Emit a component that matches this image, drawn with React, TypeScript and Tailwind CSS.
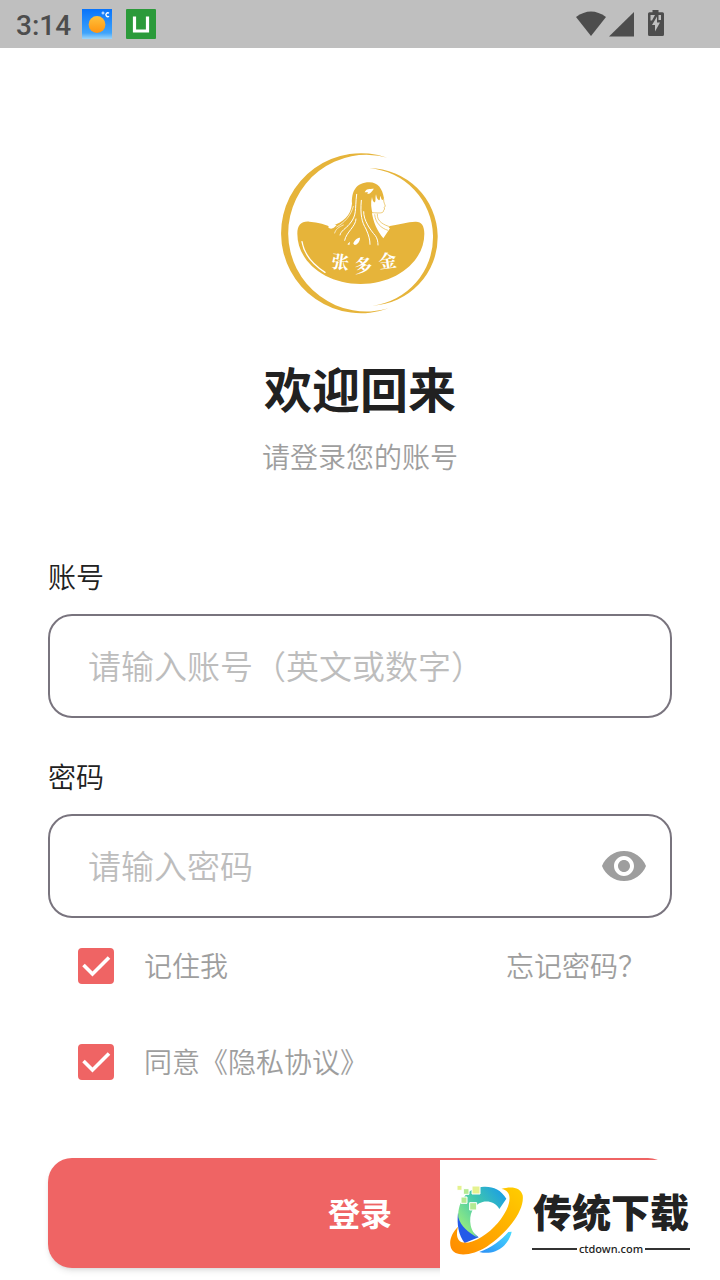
import { useState } from 'react';

function StatusBar() {
  return (
    <header className="flex h-12 items-center justify-between bg-[#bfbfbf] pr-14 pl-4 text-[#4d4d4d]">
      <div className="flex items-center">
        <span className="w-[66px] pt-1 font-['Roboto',sans-serif] text-[28px] leading-8 font-medium">3:14</span>
        <svg viewBox="0 0 30 30" className="size-[30px]" aria-hidden="true">
          <defs>
            <linearGradient id="sky" x1="0" y1="0" x2="0" y2="1">
              <stop offset="0" stopColor="#0873fb" />
              <stop offset="0.8" stopColor="#3fa4fb" />
              <stop offset="1" stopColor="#9fd6f8" />
            </linearGradient>
            <linearGradient id="sun" x1="0" y1="0" x2="0" y2="1">
              <stop offset="0" stopColor="#ffc23c" />
              <stop offset="1" stopColor="#ff9410" />
            </linearGradient>
          </defs>
          <rect width="30" height="30" fill="url(#sky)" />
          <circle cx="15" cy="15.5" r="8.4" fill="url(#sun)" />
          <circle cx="21" cy="4" r="1" fill="none" stroke="#fff" strokeWidth="0.9" />
          <path d="M27 4.200a1.900 1.900 0 1 0 0 3" fill="none" stroke="#fff" strokeWidth="1.4" />
        </svg>
        <svg viewBox="0 0 30 30" className="ml-[14px] size-[30px]" aria-hidden="true">
          <rect width="30" height="30" rx="1" fill="#2b9a3a" />
          <path d="M8.500 7.500v14.500h13v-14.500" fill="none" stroke="#fff" strokeWidth="3.2" />
        </svg>
      </div>
      <svg viewBox="0 0 88 28" className="h-7 w-[88px]" fill="currentColor" aria-hidden="true">
        <path d="M0 7Q15-4 30 7L15 26z" />
        <path d="M58 2v24.500H33z" />
        <path
          fillRule="evenodd"
          d="M76.500 2.200V0h6v2.200h4a1.500 1.500 0 0 1 1.500 1.500V24.500a1.500 1.500 0 0 1-1.500 1.500h-13a1.500 1.500 0 0 1-1.500-1.500V3.700a1.500 1.500 0 0 1 1.500-1.500zM74.500 5v5.500h1.500l3-5.500zM82.500 5v5h2.500V5zM81 6.500l-5 8.500h3v6.500l5-9h-3z"
        />
      </svg>
    </header>
  );
}

function BrandLogo() {
  return (
    <svg viewBox="0 -3 540 540" className="size-[180px]" role="img" aria-label="张多金">
      <g fill="#e6b43a">
        <path d="M352 38A240 240 0 1 0 356 490A235 235 0 1 1 352 38Z" />
        <path d="M298 70A206.100 206.100 0 0 1 306 482A207 207 0 0 0 298 70Z" />
        <path d="M82 266C82 240 94 228 118 230C145 232 166 238 192 250L240 290L330 285L360 243C388 238 412 231 436 230C454 229 463 242 463 266C463 350 378 417 272 417C166 417 82 350 82 266Z" />
        <path d="M194 268C188 260 196 248 184 244C220 230 242 214 246 176C244 140 258 112 298 112C324 113 337 130 342 160C336 172 334 160 331 152C329 160 331 166 327 166C321 163 320 156 318 148C315 158 318 166 315 172C309 172 307 162 306 156C301 174 304 190 308 208C312 232 326 258 346 276L330 296H222Z" />
      </g>
      <path d="M306 204C310 232 322 258 340 280L360 250C338 242 322 232 324 206Z" fill="#fff" />
      <g fill="none" stroke="#e6b43a" strokeWidth="2">
        <path d="M341 162C340 172 345 178 346 184L342 187L344 192L341 196C340 206 330 204 306 203" />
        <path d="M322 206C320 230 342 240 362 246M314 208C316 234 334 250 354 256" />
      </g>
      <g fill="none" stroke="#fff" strokeLinecap="round" strokeWidth="3">
        <path d="M260 148C254 196 262 210 238 238C228 250 212 258 210 270M274 166C270 210 276 232 288 252C296 270 300 284 300 298M281 200C280 226 302 256 316 272C322 280 324 290 324 300M258 222C258 244 228 262 224 286" />
        <path d="M250 184C242 214 224 232 200 246M194 264C196 254 206 246 220 240" strokeWidth="2" />
        <path d="M96 290C102 328 128 358 165 382" strokeWidth="4" />
      </g>
      <g fill="#fff">
        <path d="M284 142C288 130 298 132 312 131C306 137 304 146 292 147L294 142Z" />
        <path d="M174 246C180 238 190 238 200 240C194 246 188 254 178 250Z" />
        <path d="M250 296C252 286 262 278 270 278C270 288 264 298 254 300ZM232 298L240 290L238 300Z" />
      </g>
      <g className="font-['Noto_Serif_CJK_SC','Noto_Sans_CJK_SC',serif] text-[54px] font-bold" fill="#fff" textAnchor="middle">
        <text x="211" y="371" transform="rotate(8 211 350)">张</text>
        <text x="280" y="381" transform="rotate(-6 280 360)">多</text>
        <text x="353" y="368" transform="rotate(-8 352 350)">金</text>
      </g>
    </svg>
  );
}

function CheckOption({ label, checked, onChange }: { label: string; checked: boolean; onChange: (v: boolean) => void }) {
  return (
    <label className="flex items-center gap-[30px]">
      <span className="grid size-9 place-items-center">
        <input
          type="checkbox"
          checked={checked}
          onChange={(e) => onChange(e.target.checked)}
          className="peer col-start-1 row-start-1 size-9 appearance-none rounded border-4 border-[#9e9e9e] checked:border-[#ef6464] checked:bg-[#ef6464]"
        />
        <svg viewBox="0 0 36 36" className="pointer-events-none invisible col-start-1 row-start-1 size-9 peer-checked:visible" aria-hidden="true">
          <path d="M5.500 17l9 9L31 9.500" fill="none" stroke="#fff" strokeWidth="3.600" />
        </svg>
      </span>
      <span className="pb-[2px]">{label}</span>
    </label>
  );
}

function Watermark() {
  return (
    <aside className="fixed right-0 bottom-0 flex h-[120px] w-[280px] items-center bg-white pr-[30px] pl-[10px] text-[#222]">
      <svg viewBox="30 100 222 216" className="h-[72px] w-[74px]" aria-hidden="true">
        <defs>
          <linearGradient id="arc" x1="0" y1="0.8" x2="1" y2="0">
            <stop offset="0" stopColor="#9df07c" />
            <stop offset="0.5" stopColor="#3fc6ae" />
            <stop offset="1" stopColor="#1496f0" />
          </linearGradient>
          <linearGradient id="ring" x1="0" y1="1" x2="1" y2="0">
            <stop offset="0" stopColor="#ff8a00" />
            <stop offset="1" stopColor="#ffce00" />
          </linearGradient>
          <linearGradient id="tail" x1="0" y1="1" x2="1" y2="0">
            <stop offset="0" stopColor="#2b8ef5" />
            <stop offset="1" stopColor="#48dcff" />
          </linearGradient>
        </defs>
        <path d="M54 186C50 222 56 254 74 277L116 260C92 240 66 214 54 186Z" fill="#245be8" />
        <path d="M55 200C52 150 86 108 132 108C160 107 182 116 199 144L178 175C166 156 148 150 128 154C98 162 86 192 92 224C96 242 104 252 114 261C84 246 62 226 55 200Z" fill="url(#arc)" />
        <path d="M118 304C154 292 184 268 205 244L215 243C206 284 168 316 118 304Z" fill="url(#tail)" />
        <path
          d="M184 115C214 106 242 110 248 134C255 180 200 250 140 288C98 314 46 322 33 292C26 272 34 248 54 228C48 250 50 270 66 275C94 282 142 254 174 216C204 180 216 144 204 126C198 118 192 116 184 115Z"
          fill="url(#ring)"
        />
        <g stroke="#fff" strokeWidth="3">
          <path d="M51 104h15v15H51zM96 106h24v24H96z" fill="#e5f28f" />
          <path d="M70 114h17v17H70zM63 139h18v19H63zM89 156h21v22H89z" fill="#b3ea92" />
        </g>
      </svg>
      <div className="flex flex-1 flex-col items-center pt-1 pl-2">
        <span className="text-[39px] leading-[54px] font-black whitespace-nowrap">传统下载</span>
        <span className="flex w-full items-center gap-[2px] font-['Noto_Sans',sans-serif] text-[11px] leading-6 font-medium">
          <i className="h-[2px] flex-1 bg-[#333]" />
          ctdown.com
          <i className="h-[2px] flex-1 bg-[#333]" />
        </span>
      </div>
    </aside>
  );
}

export default function App() {
  const [account, setAccount] = useState('');
  const [password, setPassword] = useState('');
  const [showPassword, setShowPassword] = useState(false);
  const [remember, setRemember] = useState(true);
  const [agreed, setAgreed] = useState(true);

  return (
    <div className="min-h-screen bg-white font-['Noto_Sans_CJK_SC',sans-serif] text-[28px] leading-[42px] font-[350] text-[#212121]">
      <StatusBar />

      <main className="px-12 pt-24 pb-3">
        <div className="flex flex-col items-center">
          <BrandLogo />
          <h1 className="mt-[33px] text-5xl leading-[60px] font-bold">欢迎回来</h1>
          <p className="mt-[18px] text-[#9e9e9e]">请登录您的账号</p>
        </div>

        <form className="mt-[78px]" onSubmit={(e) => e.preventDefault()}>
          <label htmlFor="account" className="block">账号</label>
          <input
            id="account"
            type="text"
            value={account}
            onChange={(e) => setAccount(e.target.value)}
            placeholder="请输入账号（英文或数字）"
            className="mt-[17px] block h-[104px] w-full rounded-3xl border-2 border-[#79747e] px-[38px] pb-[2px] text-[33px] placeholder:text-[#bdbdbd]"
          />

          <label htmlFor="password" className="mt-[37px] block">密码</label>
          <div className="mt-[17px] flex h-[104px] items-center rounded-3xl border-2 border-[#79747e] pr-[22px] pl-[38px]">
            <input
              id="password"
              type={showPassword ? 'text' : 'password'}
              value={password}
              onChange={(e) => setPassword(e.target.value)}
              placeholder="请输入密码"
              className="h-full min-w-0 flex-1 pb-[2px] text-[33px] outline-none placeholder:text-[#bdbdbd]"
            />
            <button type="button" aria-label="显示密码" onClick={() => setShowPassword(!showPassword)} className="text-[#9e9e9e]">
              <svg viewBox="0 0 24 24" className="size-12" fill="currentColor" aria-hidden="true">
                <path d="M12 4.500C7 4.500 2.730 7.610 1 12c1.730 4.390 6 7.500 11 7.500s9.270-3.110 11-7.500c-1.730-4.390-6-7.500-11-7.500zM12 17c-2.760 0-5-2.240-5-5s2.240-5 5-5 5 2.240 5 5-2.240 5-5 5zm0-8c-1.660 0-3 1.340-3 3s1.340 3 3 3 3-1.340 3-3-1.340-3-3-3z" />
              </svg>
            </button>
          </div>

          <div className="flex h-24 items-center justify-between pr-[26px] pl-[30px] text-[#9e9e9e]">
            <CheckOption label="记住我" checked={remember} onChange={setRemember} />
            <a href="#forgot" className="pb-[2px]">忘记密码？</a>
          </div>
          <div className="flex h-24 items-center pl-[30px] text-[#9e9e9e]">
            <CheckOption label="同意《隐私协议》" checked={agreed} onChange={setAgreed} />
          </div>

          <button type="submit" className="mt-12 h-[110px] w-full rounded-3xl bg-[#ef6464] pb-[2px] text-[32px] font-bold text-white shadow-md">
            登录
          </button>
        </form>
      </main>

      <Watermark />
    </div>
  );
}
